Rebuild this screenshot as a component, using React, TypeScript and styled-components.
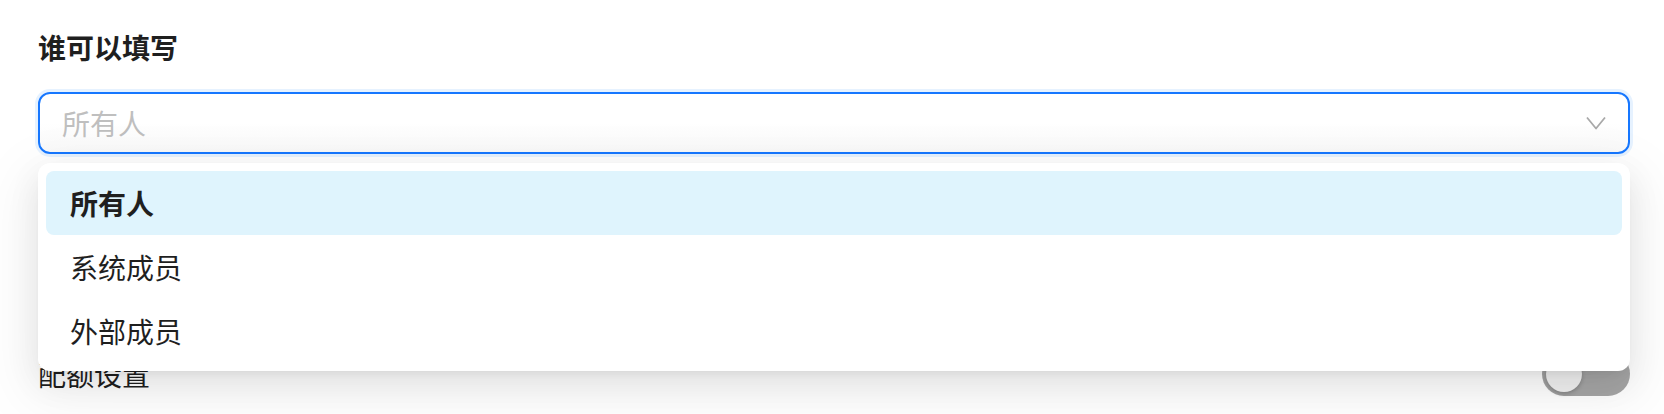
import styled, { createGlobalStyle } from 'styled-components';

const GlobalStyle = createGlobalStyle`
    body {
        margin: 0;
        background: #fff;
        font-family: "Noto Sans CJK SC", "Noto Sans", sans-serif;
        color: #1f1f1f;
    }
`;

const Page = styled.div`
    box-sizing: border-box;
    min-height: 414px;
    padding: 26px 34px 0 38px;
`;

const FieldLabel = styled.div`
    font-size: 28px;
    font-weight: 600;
    line-height: 42px;
    margin-bottom: 24px;
`;

const SelectWrap = styled.div`
    position: relative;
`;

const SelectBox = styled.div`
    box-sizing: border-box;
    height: 62px;
    display: flex;
    align-items: center;
    justify-content: space-between;
    padding: 0 22px 0 22px;
    border: 2px solid #1677ff;
    border-radius: 12px;
    box-shadow: 0 0 0 3px #e6f2ff;
    background: linear-gradient(#fff 50%, #f9f9f9);
`;

const Placeholder = styled.span`
    font-size: 28px;
    line-height: 42px;
    color: #bfbfbf;
`;

const Dropdown = styled.div`
    position: absolute;
    z-index: 10;
    top: calc(100% + 9px);
    left: 0;
    right: 0;
    padding: 8px;
    background: #fff;
    border-radius: 12px;
    box-shadow: 0 12px 32px 0 rgba(0, 0, 0, 0.08), 0 6px 12px -8px rgba(0, 0, 0, 0.12),
        0 18px 56px 16px rgba(0, 0, 0, 0.05);
`;

const Option = styled.div<{ $selected?: boolean }>`
    height: 64px;
    display: flex;
    align-items: center;
    padding: 0 24px;
    border-radius: 8px;
    font-size: 28px;
    font-weight: ${(p) => (p.$selected ? 600 : 400)};
    background: ${(p) => (p.$selected ? '#dff4fd' : 'transparent')};
`;

const SettingRow = styled.div`
    margin-top: 198px;
    height: 44px;
    display: flex;
    align-items: center;
    justify-content: space-between;
    font-size: 28px;
`;

const Switch = styled.div`
    box-sizing: border-box;
    width: 88px;
    height: 44px;
    padding: 4px;
    border-radius: 22px;
    background: #a6a6a6;
    display: flex;
    align-items: center;
`;

const Knob = styled.div`
    width: 36px;
    height: 36px;
    border-radius: 50%;
    background: #f2f2f2;
    box-shadow: 0 2px 4px rgba(0, 0, 0, 0.2);
`;

const Chevron = () => (
    <svg width="20" height="14" viewBox="0 0 20 14" fill="none">
        <polyline points="1,1.5 10,12.5 19,1.5" stroke="#a9a9a9" strokeWidth="1.8" strokeLinejoin="round" />
    </svg>
);

const options = ['所有人', '系统成员', '外部成员'];

const App = () => {
    return (
        <>
            <GlobalStyle />
            <Page>
                <FieldLabel>谁可以填写</FieldLabel>
                <SelectWrap>
                    <SelectBox>
                        <Placeholder>所有人</Placeholder>
                        <Chevron />
                    </SelectBox>
                    <Dropdown>
                        {options.map((o, i) => (
                            <Option key={o} $selected={i === 0}>
                                {o}
                            </Option>
                        ))}
                    </Dropdown>
                </SelectWrap>
                <SettingRow>
                    <span>配额设置</span>
                    <Switch>
                        <Knob />
                    </Switch>
                </SettingRow>
            </Page>
        </>
    );
};

export default App;
